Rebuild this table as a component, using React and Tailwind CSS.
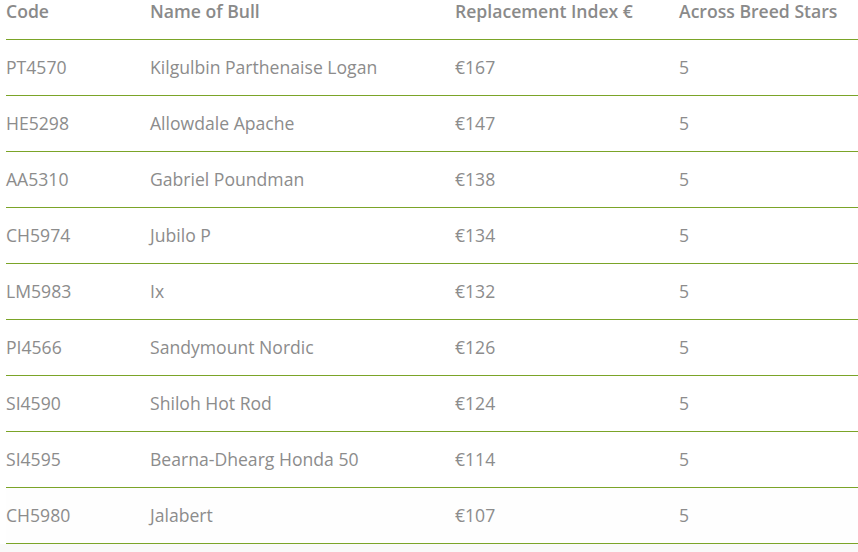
import React from "react";

const bulls = [
  ["PT4570", "Kilgulbin Parthenaise Logan", "€167", "5"],
  ["HE5298", "Allowdale Apache", "€147", "5"],
  ["AA5310", "Gabriel Poundman", "€138", "5"],
  ["CH5974", "Jubilo P", "€134", "5"],
  ["LM5983", "Ix", "€132", "5"],
  ["PI4566", "Sandymount Nordic", "€126", "5"],
  ["SI4590", "Shiloh Hot Rod", "€124", "5"],
  ["SI4595", "Bearna-Dhearg Honda 50", "€114", "5"],
  ["CH5980", "Jalabert", "€107", "5"],
];

const cols = "grid grid-cols-[144px_305px_224px_1fr]";

const App = () => {
  return (
    <div
      className="bg-[#f9f9f9] w-[858px] h-[552px] overflow-hidden"
      style={{ fontFamily: "'Open Sans', 'Liberation Sans', sans-serif" }}
    >
      <div className="bg-white pl-[6px]">
        <div
          className={`${cols} h-[40px] border-b border-[#7ba428] text-[17.6px] font-semibold text-[#8a8a8a] leading-[22px]`}
        >
          <div>Code</div>
          <div>Name of Bull</div>
          <div>Replacement Index €</div>
          <div>Across Breed Stars</div>
        </div>

        {bulls.map((row, i) => (
          <div
            key={row[0]}
            className={`${cols} h-[56px] items-center pb-[1px] border-b border-[#7ba428] text-[17.6px] text-[#8c8c8c] ${
              i === bulls.length - 1 ? "bg-[#fefefe]" : ""
            }`}
          >
            <div>{row[0]}</div>
            <div>{row[1]}</div>
            <div>{row[2]}</div>
            <div>{row[3]}</div>
          </div>
        ))}
      </div>
    </div>
  );
};

export default App;
